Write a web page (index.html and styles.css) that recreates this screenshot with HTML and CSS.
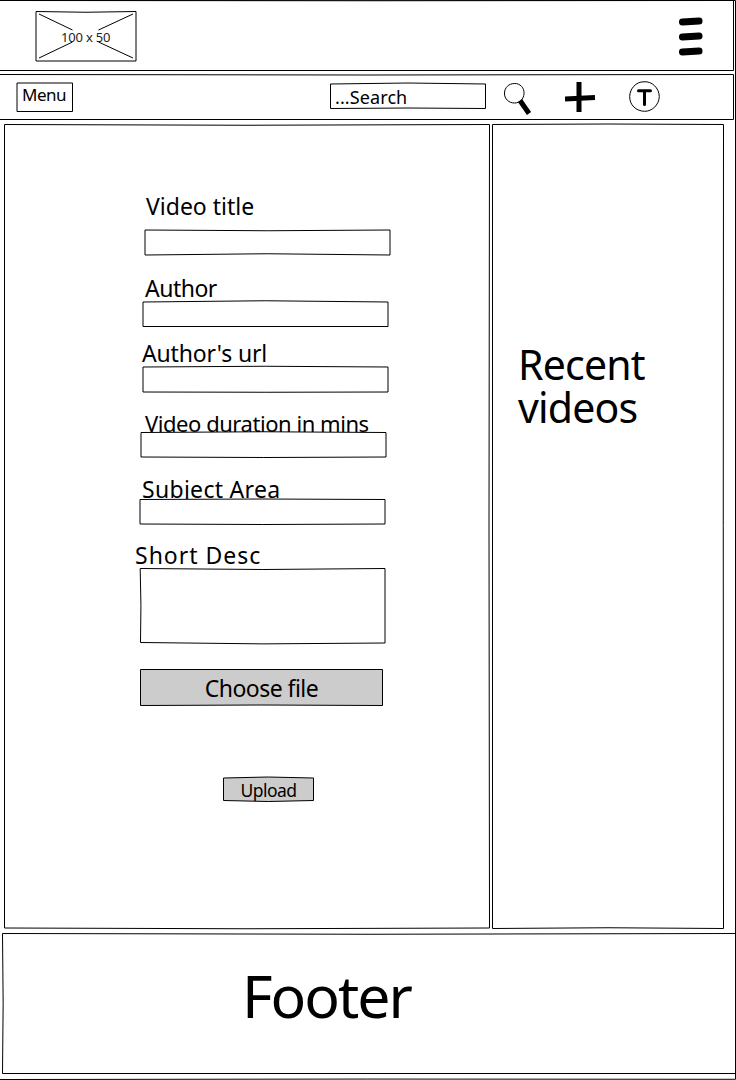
FILE: index.html
```html
<!DOCTYPE html>
<html lang="en">
<head>
<meta charset="utf-8">
<title>Upload video</title>
<link rel="stylesheet" href="styles.css">
</head>
<body>
<div class="page">
  <svg class="frame" viewBox="0 0 736 1080"><path d="M0 .5Q368-.3 735.500 .5V1079.300Q368 1078.700 0 1079.500"/></svg>
  <header class="header">
    <svg class="frame" viewBox="0 0 734 71"><path d="M0 .5Q367 1 733.500 .5V70.500H0"/></svg>
    <div class="logo">
      <svg class="frame" viewBox="0 0 101 51"><path d="M0 .5Q50 2 100 .5V50H0ZM3 3 36.500 19M97 3 62.500 19M3 47 36.500 31M97 47 62.500 31"/></svg>
      <span class="logo-text">100 x 50</span>
    </div>
    <svg class="burger" viewBox="0 0 24 40"><path d="M3.500 6 20 5M3.500 21 20 20M3.500 36 20 35"/></svg>
  </header>
  <nav class="nav">
    <svg class="frame" viewBox="0 0 734 46"><path d="M0 .5Q367 1.500 733.500 .5V45.500H0"/></svg>
    <button class="menu"><svg class="frame" viewBox="0 0 57 30"><path d="M1 1H56.500V29.500H1Z"/></svg><span>Menu</span></button>
    <div class="search"><svg class="frame" viewBox="0 0 156 26"><path d="M.5 1Q78-1 155.500 1V25.500Q78 24.500.5 25.500Z"/></svg><span>...Search</span></div>
    <svg class="glass" viewBox="0 0 28 34"><path class="thin" d="M10.500 1.500C16 1.200 20.500 6 20 11.500 19.700 17 16 21 10.500 21 5 21 .2 17 .5 11 .6 5.500 5 1.500 10.500 1.500Z"/><path class="handle" d="M16 18.500 25 31.500"/></svg>
    <svg class="plus" viewBox="0 0 30 30"><path d="M14 0V30M0 17 30 15.500"/></svg>
    <svg class="avatar" viewBox="0 0 31 31"><path class="thin" d="M15 .8C23 0 30 7 30.300 15.500 30 24 23 30.500 15.500 30.300 7 30 .5 24 .7 15.500.7 8 7 .5 15 .8Z"/><path class="letter" d="M9.500 9.700H21.500M15.500 10V23.500"/></svg>
  </nav>
  <main class="main">
    <form class="form">
      <svg class="frame" viewBox="0 0 486 805"><path d="M.5.500Q243 2 485.500.500 484.500 400 485.500 804 243 805.500.5 804Z"/></svg>
      <div class="field title">
        <label>Video title</label>
        <div class="box"><svg class="frame" viewBox="0 0 246 25"><path d="M1 0Q123 1.500 246 0V25Q123 22.500 1 25Z"/></svg></div>
      </div>
      <div class="field author">
        <label>Author</label>
        <div class="box"><svg class="frame" viewBox="0 0 246 26"><path d="M1 1Q123-1.500 246 1V25.500H1Z"/></svg></div>
      </div>
      <div class="field url">
        <label>Author's url</label>
        <div class="box"><svg class="frame" viewBox="0 0 246 26"><path d="M1 1Q123-.5 246 1V26Q123 26.500 1 26Z"/></svg></div>
      </div>
      <div class="field duration">
        <label>Video duration in mins</label>
        <div class="box"><svg class="frame" viewBox="0 0 246 25"><path d="M1 .5Q123-1 246 .5V25Q123 26 1 25Z"/></svg></div>
      </div>
      <div class="field subject">
        <label>Subject Area</label>
        <div class="box"><svg class="frame" viewBox="0 0 246 25"><path d="M0 .5Q123-.5 245 .5V25Q123 26 0 25Z"/></svg></div>
      </div>
      <div class="field desc">
        <label>Short Desc</label>
        <div class="box"><svg class="frame" viewBox="0 0 246 75"><path d="M.2.500Q123 2.500 245 .5V75Q123 77 .5 74.500 1.500 37 .2.500Z"/></svg></div>
      </div>
      <button type="button" class="choose"><svg class="frame" viewBox="0 0 243 37"><path d="M.5.500H242.500V36.500Q121 35.500.5 36.500Z"/></svg><span>Choose file</span></button>
      <button type="button" class="upload"><svg class="frame" viewBox="0 0 91 24"><path d="M.5 1Q45-1 90.500 1V23.500Q45 25.500.5 23.500Z"/></svg><span>Upload</span></button>
    </form>
    <aside class="recent">
      <svg class="frame" viewBox="0 0 232 805"><path d="M.5.500Q116-.5 231.500.500 231 400 231.500 804.500 116 803 .5 804.500Z"/></svg>
      <h2>Recent<br>videos</h2>
    </aside>
  </main>
  <footer class="footer">
    <svg class="frame" viewBox="0 0 734 141"><path d="M734 .5Q367 2 .5.500 1.800 70 .5 140.500H733.500V146"/></svg>
    <span>Footer</span>
  </footer>
</div>
</body>
</html>
```
FILE: styles.css
```css
* { box-sizing: border-box; }
body { margin: 0; background: #fff; color: #000; font-family: "Comic Sans MS", "Noto Sans", sans-serif; }
button { border: 0; padding: 0; background: none; color: inherit; font: inherit; text-align: left; }
svg { display: block; fill: none; stroke: #000; }

.page { position: relative; width: 736px; height: 1080px; overflow: hidden; }
.frame { position: absolute; inset: 0; width: 100%; height: 100%; overflow: visible; stroke-width: 1; pointer-events: none; }
span, label { position: relative; white-space: nowrap; }

.header { position: relative; display: flex; justify-content: space-between; width: 734px; height: 71px; padding: 11px 31px 0 36px; }
.logo { position: relative; width: 101px; height: 51px; padding-left: 25px; }
.logo-text { font-size: 13px; line-height: 52px; letter-spacing: -.2px; color: #222; }
.burger { width: 24px; height: 40px; margin-top: 5px; stroke-width: 7; stroke-linecap: round; }

.nav { position: relative; display: flex; width: 734px; height: 46px; margin-top: 3px; padding-left: 16px; }
.menu { position: relative; width: 57px; height: 30px; margin-top: 8px; padding-left: 6px; font-size: 17px; line-height: 25px; letter-spacing: -.5px; }
.menu span { display: block; margin-top: -5px; }
.search { position: relative; width: 156px; height: 26px; margin: 9px 0 0 257px; padding-left: 5px; font-size: 18px; line-height: 28px; letter-spacing: .1px; }
.glass { width: 28px; height: 34px; margin: 8px 0 0 18px; }
.handle { stroke-width: 5; }
.plus { width: 30px; height: 30px; margin: 8px 0 0 33px; stroke-width: 5; }
.avatar { width: 31px; height: 31px; margin: 7px 0 0 34px; }
.letter { stroke-width: 3; stroke-linecap: round; }

.main { display: flex; gap: 2px; height: 805px; margin: 4px 0 0 4px; }
.form { position: relative; width: 486px; padding-top: 69px; font-size: 23px; }
.field { width: 246px; margin-left: 136px; }
.field label { display: block; height: 24px; line-height: 26px; }
.box { position: relative; height: 26px; margin-top: 2px; background: #fff; }
.title { margin-left: 140px; }
.title label { padding-left: 2px; }
.title .box { height: 25px; margin-top: 13px; }
.author { margin: 20px 0 0 138px; }
.author label { padding-left: 3px; letter-spacing: -.5px; }
.url { margin: 13px 0 0 138px; }
.url label { letter-spacing: -.15px; }
.duration { margin-top: 18px; }
.duration label { padding-left: 5px; font-size: 22px; letter-spacing: -.45px; }
.duration .box { height: 25px; margin-top: -2px; }
.subject { margin-top: 19px; }
.subject label { padding-left: 2px; letter-spacing: .3px; }
.subject .box { height: 25px; margin-top: -1px; }
.desc { margin-top: 18px; }
.desc label { margin-left: -5px; letter-spacing: 1px; }
.desc .box { height: 75px; }
.choose, .upload { position: relative; display: block; text-align: center; letter-spacing: -.55px; }
.choose .frame, .upload .frame { fill: #ccc; }
.choose { width: 243px; height: 37px; margin: 26px 0 0 136px; line-height: 38px; }
.upload { width: 91px; height: 24px; margin: 71px 0 0 219px; font-size: 17.5px; line-height: 26px; }

.recent { position: relative; width: 232px; padding: 219px 0 0 26px; }
.recent h2 { margin: 0; font-size: 41px; font-weight: 400; line-height: 43px; letter-spacing: -.8px; }

.footer { position: relative; width: 734px; height: 141px; margin: 4px 0 0 2px; padding-left: 240px; font-size: 59px; line-height: 124px; letter-spacing: -2px; }
```
